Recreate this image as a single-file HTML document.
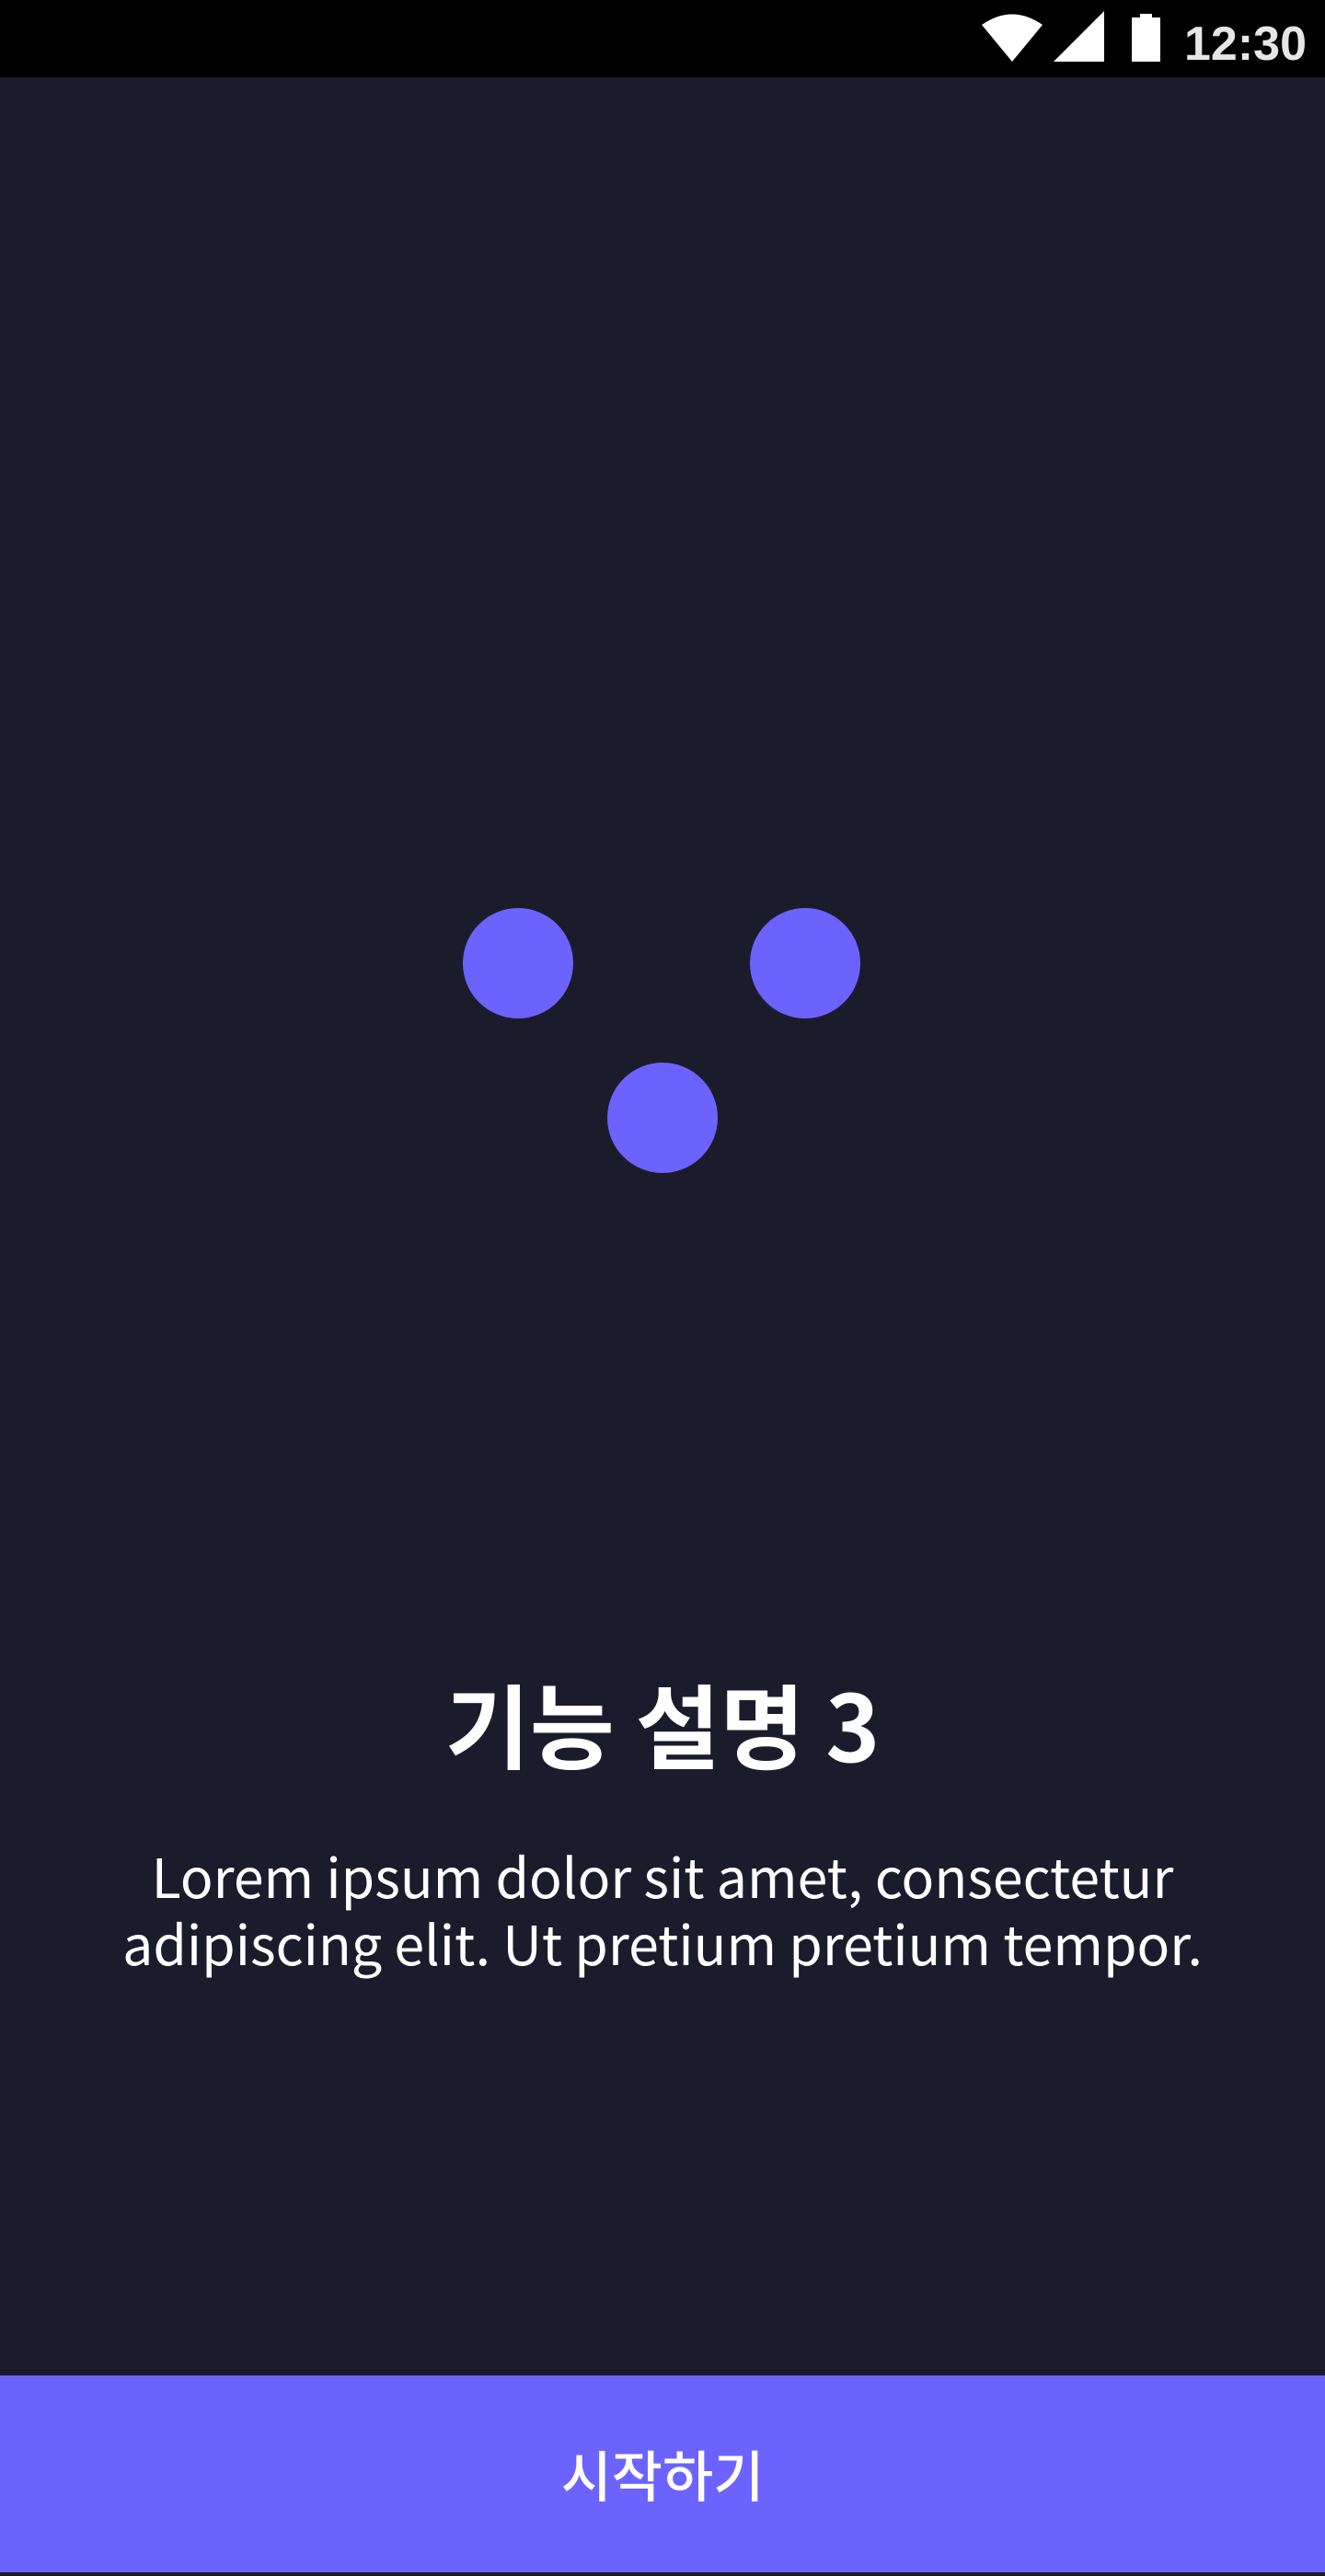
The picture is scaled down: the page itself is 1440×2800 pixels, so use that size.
<!DOCTYPE html>
<html><head><meta charset="utf-8"><style>
html,body{margin:0;padding:0}
body{width:1440px;height:2800px;background:#1b1c2b;position:relative;overflow:hidden;font-family:"Noto Sans CJK KR",sans-serif}
.sb{position:absolute;left:0;top:0;width:1440px;height:84px;background:#000}
.c{position:absolute;width:120px;height:120px;border-radius:50%;background:#6c63ff}
.t{position:absolute;left:0;width:1440px;text-align:center;color:#fff}
.btn{position:absolute;left:0;top:2582px;width:1440px;height:214px;background:#6c63ff}
</style></head><body>
<div class="sb">
<svg width="1440" height="84" style="position:absolute;left:0;top:0">
<path d="M1067 27 Q1100 4 1133 27 L1100 67 Z" fill="#fff"/>
<path d="M1145 67 L1200 12 L1200 67 Z" fill="#fff"/>
<rect x="1230" y="19" width="31" height="48" fill="#fff"/>
<rect x="1239" y="15" width="13" height="5" fill="#fff"/>
<text x="1287" y="65" font-family="Liberation Sans" font-weight="bold" font-size="52" fill="#e6e6e6">12:30</text>
</svg>
</div>
<div class="c" style="left:503px;top:987px"></div>
<div class="c" style="left:815px;top:987px"></div>
<div class="c" style="left:660px;top:1155px"></div>
<div class="t" style="top:1812px;font-size:100px;font-weight:bold;line-height:120px">기능 설명 3</div>
<div class="t" style="top:2001px;font-size:59px;line-height:73px">Lorem ipsum dolor sit amet, consectetur<br>adipiscing elit. Ut pretium pretium tempor.</div>
<div class="btn"><div class="t" style="top:72px;font-size:60px;line-height:70px;font-weight:500">시작하기</div></div>
</body></html>
